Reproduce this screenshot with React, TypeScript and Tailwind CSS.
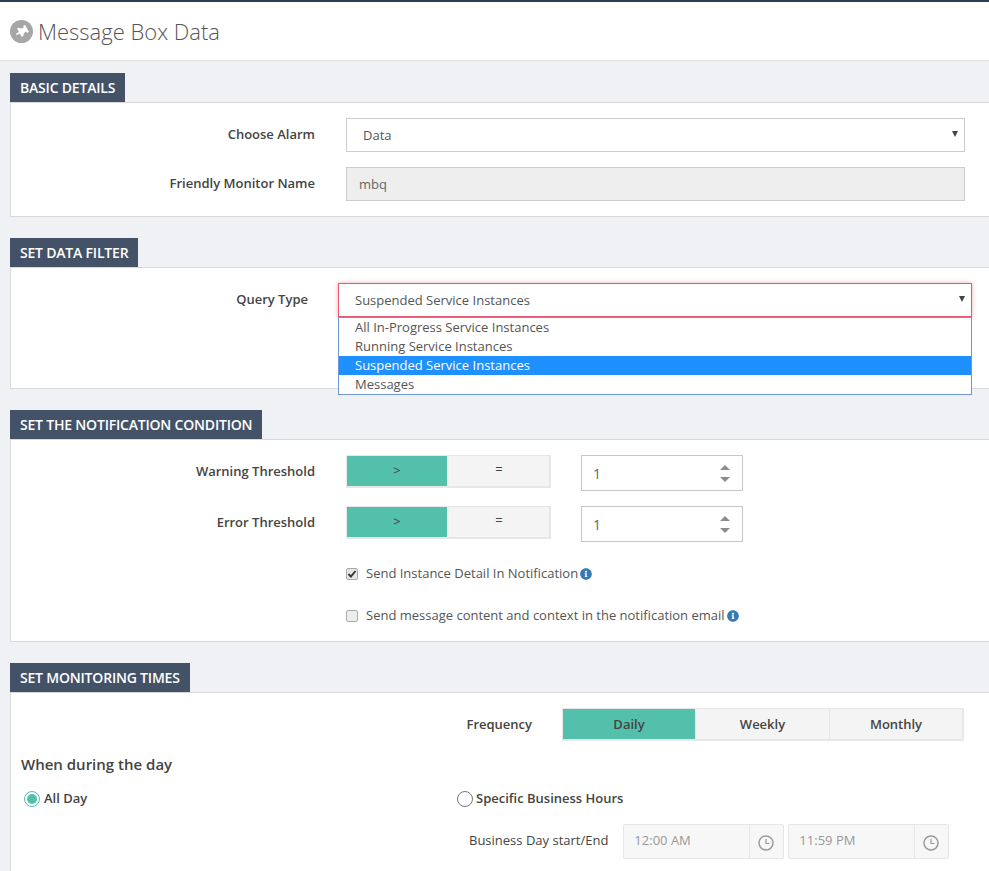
import { FaInfoCircle, FaThumbtack } from "react-icons/fa";

function SectionTab({ title }: { title: string }) {
  return (
    <div className="h-[30px] w-fit bg-[#435267] px-[10px] text-[14px] leading-[30px] font-semibold text-white tracking-[-0.2px]">
      {title}
    </div>
  );
}

function FakeSelect({ value, className }: { value: string; className: string }) {
  return (
    <div className={`flex items-center justify-between bg-white pl-4 pr-[6px] pt-px text-[13px] text-[#555] ${className}`}>
      <span>{value}</span>
      <svg width="6" height="6" viewBox="0 0 6 6" className="mb-[3px]">
        <path d="M0 0h6L3 6z" fill="#444" />
      </svg>
    </div>
  );
}

function Toggle() {
  return (
    <div className="flex h-[33px] w-[205px] border-t border-l border-r-2 border-b-2 border-[#e7e7e7] text-[13px] text-[#444]">
      <div className="flex w-[100px] items-center justify-center bg-[#52c0ab]">&gt;</div>
      <div className="flex flex-1 items-center justify-center border-l-2 border-[#efefef] bg-[#f4f4f4] pb-[2px]">=</div>
    </div>
  );
}

function NumberBox() {
  return (
    <div className="ml-[30px] flex h-9 w-[162px] items-center justify-between border border-[#c8c8c8] bg-white pl-[11px] pr-[12px] text-[14px] text-[#666]">
      <span>1</span>
      <div className="flex flex-col gap-[7px]">
        <svg width="10" height="5" viewBox="0 0 10 5"><path d="M5 0l5 5H0z" fill="#8c8c8c" /></svg>
        <svg width="10" height="5" viewBox="0 0 10 5"><path d="M0 0h10L5 5z" fill="#8c8c8c" /></svg>
      </div>
    </div>
  );
}

function ClockIcon() {
  return (
    <svg width="16" height="16" viewBox="0 0 16 16" fill="none" stroke="#9a9a9a" strokeWidth="1.5">
      <circle cx="8" cy="8" r="7" />
      <path d="M8 4v4.5h3.5" strokeWidth="1.2" />
    </svg>
  );
}

function TimeBox({ value, className }: { value: string; className: string }) {
  return (
    <div className={`flex h-[35px] rounded-[2px] border border-[#e6e6e6] bg-[#f7f7f7] text-[13px] text-[#999] ${className}`}>
      <span className="flex-1 pl-[10px] leading-[30px]">{value}</span>
      <div className="flex w-[34px] items-center justify-center border-l border-[#e6e6e6] pt-[3px] pr-px">
        <ClockIcon />
      </div>
    </div>
  );
}

export default function App() {
  return (
    <div
      className="h-[871px] w-[989px] overflow-hidden bg-[#eff1f5] text-[#444]"
      style={{ fontFamily: '"Open Sans", sans-serif' }}
    >
      <div className="h-[2px] bg-[#2a3f5a]" />
      <div className="flex h-[59px] items-center border-b border-[#e0e0e0] bg-white pl-[10px]">
        <div className="flex h-[23px] w-[23px] items-center justify-center rounded-full bg-[#a6a6a6] text-white">
          <FaThumbtack size={13} className="rotate-[60deg]" />
        </div>
        <h1 className="ml-[5px] text-[22px] font-light text-[#555] leading-none">Message Box Data</h1>
      </div>

      <div className="pl-[10px]">
        {/* basic details */}
        <div className="mt-3">
          <SectionTab title="BASIC DETAILS" />
          <div className="-mt-px h-[115px] border border-r-0 border-[#d8d8dc] bg-white pt-[15px]">
            <div className="flex items-center">
              <label className="w-[304px] text-right text-[13px] font-semibold text-[#444]">Choose Alarm</label>
              <FakeSelect value="Data" className="ml-[31px] h-[34px] w-[619px] border border-[#ccc]" />
            </div>
            <div className="mt-[15px] flex items-center">
              <label className="w-[304px] text-right text-[13px] font-semibold text-[#444]">Friendly Monitor Name</label>
              <div className="ml-[31px] flex h-[34px] w-[619px] items-center border border-[#ccc] bg-[#eeeeee] pl-3 pt-[2px] text-[13px] text-[#666]">
                mbq
              </div>
            </div>
          </div>
        </div>

        {/* data filter */}
        <div className="mt-[21px]">
          <SectionTab title="SET DATA FILTER" />
          <div className="relative -mt-px h-[122px] border border-r-0 border-[#d8d8dc] bg-white pt-[15px]">
            <div className="flex items-center">
              <label className="w-[297px] text-right text-[13px] font-semibold text-[#444]">Query Type</label>
              <FakeSelect
                value="Suspended Service Instances"
                className="ml-[30px] h-[34px] w-[634px] border border-[#e8596f] shadow-[0_0_4px_rgba(232,89,111,0.55)]"
              />
            </div>
            <ul className="absolute top-[49px] left-[327px] w-[634px] border border-[#6f94d8] bg-white text-[13px] leading-[19px] text-[#555]">
              <li className="h-[19px] pl-4">All In-Progress Service Instances</li>
              <li className="h-[19px] pl-4">Running Service Instances</li>
              <li className="h-[19px] bg-[#1e90ff] pl-4 text-white">Suspended Service Instances</li>
              <li className="h-[19px] pl-4">Messages</li>
            </ul>
          </div>
        </div>

        {/* notification condition */}
        <div className="mt-[21px]">
          <SectionTab title="SET THE NOTIFICATION CONDITION" />
          <div className="-mt-px h-[203px] border border-r-0 border-[#d8d8dc] bg-white pt-[15px]">
            <div className="flex items-start">
              <label className="mt-[7px] w-[304px] text-right text-[13px] font-semibold text-[#444]">Warning Threshold</label>
              <div className="ml-[31px]"><Toggle /></div>
              <NumberBox />
            </div>
            <div className="mt-[15px] flex items-start">
              <label className="mt-[7px] w-[304px] text-right text-[13px] font-semibold text-[#444]">Error Threshold</label>
              <div className="ml-[31px]"><Toggle /></div>
              <NumberBox />
            </div>
            <div className="mt-[22px] ml-[335px] flex h-5 items-center text-[13px] text-[#555]">
              <span className="flex h-3 w-3 items-center justify-center rounded-[2px] border border-[#aaa] bg-[#e6e6e6]">
                <svg width="10" height="8" viewBox="0 0 10 8"><path d="M1.5 4l2.4 2.6L8.5 1" fill="none" stroke="#333" strokeWidth="1.9" /></svg>
              </span>
              <span className="ml-2">Send Instance Detail In Notification</span>
              <FaInfoCircle size={12} className="ml-[2px] text-[#337ab7]" />
            </div>
            <div className="mt-[22px] ml-[335px] flex h-5 items-center text-[13px] text-[#555]">
              <span className="h-3 w-3 rounded-[2px] border border-[#aaa] bg-[#eeeeee]" />
              <span className="ml-2">Send message content and context in the notification email</span>
              <FaInfoCircle size={12} className="ml-[2px] text-[#337ab7]" />
            </div>
          </div>
        </div>

        {/* monitoring times */}
        <div className="mt-[21px]">
          <SectionTab title="SET MONITORING TIMES" />
          <div className="-mt-px h-[190px] border border-r-0 border-[#d8d8dc] bg-white pt-[15px]">
            <div className="flex items-center">
              <label className="w-[521px] text-right text-[13px] font-semibold text-[#444]">Frequency</label>
              <div className="ml-[30px] flex h-[33px] w-[402px] border-t border-l border-r-2 border-b-2 border-[#e7e7e7] pt-0 text-[13px] font-semibold text-[#444]">
                <div className="flex w-[132px] items-center justify-center bg-[#52c0ab] pt-px">Daily</div>
                <div className="flex w-[134px] items-center justify-center border-l border-[#e7e7e7] bg-[#f4f4f4] pt-px">Weekly</div>
                <div className="flex flex-1 items-center justify-center border-l border-[#e7e7e7] bg-[#f4f4f4] pt-px">Monthly</div>
              </div>
            </div>
            <div className="mt-[13px] ml-[10px] text-[15px] font-semibold leading-5 text-[#444]">When during the day</div>
            <div className="mt-[15px] flex items-center">
              <span className="ml-[13px] flex h-4 w-4 items-center justify-center rounded-full border border-[#52c0ab]">
                <span className="h-[10px] w-[10px] rounded-full bg-[#52c0ab]" />
              </span>
              <span className="ml-[4px] w-[413px] text-[13px] font-semibold">All Day</span>
              <span className="h-4 w-4 rounded-full border border-[#777]" />
              <span className="ml-[3px] text-[13px] font-semibold">Specific Business Hours</span>
            </div>
            <div className="mt-[15px] flex items-start">
              <span className="mt-[7px] ml-[458px] text-[13px] text-[#444]">Business Day start/End</span>
              <TimeBox value="12:00 AM" className="ml-[15px] w-[161px]" />
              <TimeBox value="11:59 PM" className="ml-[4px] w-[161px]" />
            </div>
          </div>
        </div>
      </div>
    </div>
  );
}
